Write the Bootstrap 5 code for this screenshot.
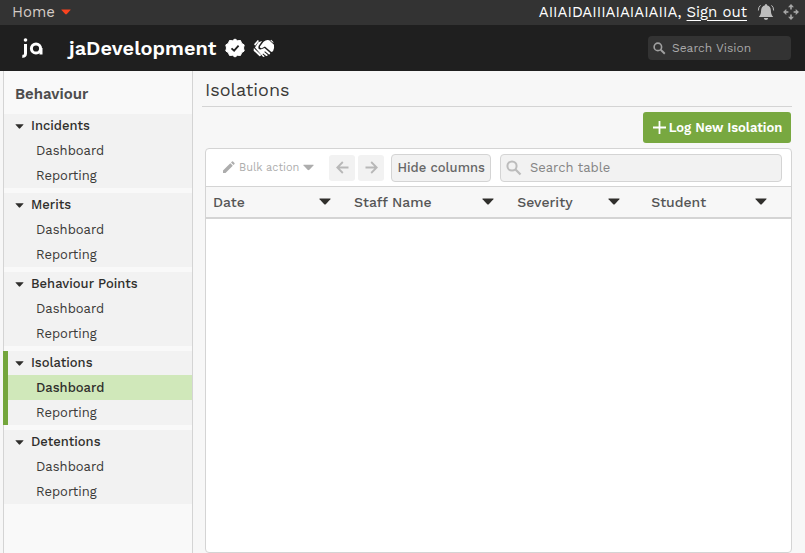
<!DOCTYPE html>
<html lang="en">
<head>
<meta charset="utf-8">
<meta name="viewport" content="width=device-width, initial-scale=1">
<title>Isolations - jaDevelopment</title>
<link href="https://cdn.jsdelivr.net/npm/bootstrap@5.3.0/dist/css/bootstrap.min.css" rel="stylesheet">
<style>
  body { font-family: "Work Sans", Inter, "Open Sans", sans-serif; font-size: 13px; line-height: 20px; color: #3b3a38; background: #f7f7f7; }
  svg { display: block; flex: none; }
  .btn { font-size: 13px; line-height: 20px; }
  .top-strip { background: #333; height: 25px; font-size: 15px; color: #fff; padding: 0 5px 2px 12px; }
  .top-strip .home-menu { font-size: 15px; color: #d3cbc6; gap: 6px; }
  .top-strip .bell { margin: 0 5px 0 8px; }
  .top-strip a { color: #fff; text-underline-offset: 3px; }
  .brand-strip { background: #1f1f1f; height: 46px; padding: 0 14px 0 22px; }
  .brand-name { font-size: 20px; line-height: 24px; font-weight: 600; color: #fff; margin: 0 9px 0 25px; }
  .vision-search { width: 143px; height: 24px; background: #333; border-radius: 4px; padding: 0 5px; gap: 6px; }
  .vision-search input { font-size: 12px; color: #ccc; }
  .vision-search input::placeholder { color: #a9a9a9; opacity: 1; }
  input { outline-offset: 2px; min-width: 0; }
  .side { width: 190px; margin-left: 3px; border: solid #d4d4d4; border-width: 0 1px; background: #f9f9f9; }
  .side h2 { font-size: 15px; line-height: 22px; font-weight: 600; color: #4d4d4d; margin: 0; padding: 12px 11px 9px; }
  .side-group { background: #f2f2f2; margin-bottom: 5px; }
  .side-group .group-toggle { height: 24px; padding: 0 11px; gap: 7px; font-weight: 500; color: #2f2e2c; }
  .side-group a { display: block; height: 25px; line-height: 25px; padding-left: 32px; color: #3b3a38; text-decoration: none; }
  .side-group.current { border-left: 5px solid #74a63c; margin-left: -1px; }
  .side-group.current .group-toggle { padding-left: 7px; }
  .side-group.current a { padding-left: 28px; }
  .side-group a.active { background: #d0e8ba; font-weight: 500; color: #2f2e2c; }
  .main-area { padding: 0 13px 0 9px; }
  .main-area h1 { font-size: 18px; line-height: 24px; font-weight: 400; margin: 0; padding: 7px 3px 4px; border-bottom: 1px solid #d4d4d4; }
  .log-btn { min-width: 148px; height: 31px; border-radius: 3px; background: #78a840; color: #fff; font-weight: 600; padding: 0 6px; gap: 2px; margin: 5px 1px 5px 0; }
  .panel { margin-left: 3px; border: 1px solid #d4d4d4; border-radius: 4px; background: #fff; }
  .tools { height: 37px; padding: 0 9px 0 16px; }
  .bulk-btn { color: #adadad; font-size: 11px; gap: 4px; margin-right: 15px; }
  .step-btn { width: 26px; height: 26px; border-radius: 3px; background: #f2f2f2; color: #b8b8b8; margin-right: 3px; }
  .hide-btn { height: 28px; padding: 0 5px; border: 1px solid #d4d4d4; border-radius: 4px; background: #f2f2f2; color: #666; font-weight: 500; margin: 0 9px 0 4px; }
  .table-search { height: 28px; border: 1px solid #d4d4d4; border-radius: 4px; background: #f2f2f2; padding: 0 5px; gap: 8px; }
  .table-search input::placeholder { color: #858585; opacity: 1; }
  .records { table-layout: fixed; border-collapse: collapse; }
  .records th { height: 31px; padding: 0 0 0 7px; background: #f7f7f7; border-top: 1px solid #d4d4d4; border-bottom: 2px solid #d4d4d4; font-size: 14px; font-weight: 500; color: #555; }
  .records svg { color: #302f2c; }
</style>
</head>
<body class="d-flex flex-column min-vh-100">
<svg class="d-none" aria-hidden="true">
  <symbol id="caret" viewBox="0 0 12 7"><path d="M.8.5h10.4q.8 0 .2.7L7 6Q6 7 5 6L.6 1.200Q0 .5.8.5z" fill="currentColor"/></symbol>
  <symbol id="lens" viewBox="0 0 16 16"><circle cx="6" cy="6" r="4.600" fill="none" stroke="currentColor" stroke-width="2"/><path d="M9.500 9.500l5 5" stroke="currentColor" stroke-width="2.300" fill="none"/></symbol>
</svg>

<header>
  <div class="top-strip d-flex align-items-center">
    <button type="button" class="home-menu btn p-0 border-0 d-flex align-items-center">Home
      <svg width="10" height="6" color="#f8431f" aria-hidden="true"><use href="#caret"/></svg></button>
    <div class="ms-auto">AIIAIDAIIIAIAIAIAIIA, <a href="#">Sign out</a></div>
    <button type="button" class="bell btn p-0 border-0" aria-label="Notifications">
      <svg width="22" height="18" viewBox="0 0 22 18" fill="#bdbdbd"><path d="M11 1q1 0 1 1.300c2.500.6 3.800 2.300 3.900 5.200.1 3.200.5 4.300 2.300 6.500H3.800c1.800-2.200 2.200-3.300 2.300-6.500.1-2.900 1.400-4.600 3.900-5.200Q10 1 11 1zM8.800 15h4.400q-.3 2-2.200 2t-2.200-2z"/><path d="M5.500 2.300Q3.300 4 3.400 7.500M16.500 2.300Q18.700 4 18.600 7.500" fill="none" stroke="#bdbdbd"/></svg></button>
    <button type="button" class="btn p-0 border-0" aria-label="Expand">
      <svg width="18" height="18" viewBox="0 0 18 18" fill="#a6a6a6"><g id="arm"><path d="M9 1l3 3.300H6z"/><path d="M8.200 4h1.600v2.400H8.200z"/></g><use href="#arm" transform="rotate(90 9 9)"/><use href="#arm" transform="rotate(180 9 9)"/><use href="#arm" transform="rotate(270 9 9)"/></svg></button>
  </div>
  <div class="brand-strip d-flex align-items-center">
    <svg width="22" height="22" viewBox="0 0 22 22" role="img" aria-label="ja" fill="none" stroke="#fff" stroke-width="3"><path d="M3.500 7v9.500q0 3-3.200 2.700"/><circle cx="3.500" cy="3" r="1.800" fill="#fff" stroke="none"/><circle cx="14" cy="11.500" r="4.600"/><path d="M19 11V17.500"/></svg>
    <div class="brand-name">jaDevelopment</div>
    <svg width="20" height="20" viewBox="0 0 20 20" role="img" aria-label="Verified"><path d="M10 1l2.500 1.700 3-.2 1.100 2.800 2.600 1.600L18.500 10l.7 3-2.600 1.700-1.100 2.700-3-.1L10 19l-2.500-1.700-3 .1-1.100-2.700L.8 13l.7-3-.7-3.100 2.600-1.600 1.100-2.800 3 .2z" fill="#fff" stroke="#fff" stroke-linejoin="round"/><path d="M6.500 10.300l2.600 2.400 4.500-5" fill="none" stroke="#1f1f1f" stroke-width="1.800"/></svg>
    <svg class="ms-2" width="22" height="19" viewBox="0 0 23 20" role="img" aria-label="Partnership" fill="#fff"><path d="M1 5.500L5 1l1.200 1-4 5zM11 2.800Q14 .4 17 1.400L22 6q.7 4-1 6.800l-1.800 1L12.500 8l-3.400 1.700Q7 10 7.200 8zM5.500 3.300l4-1.200L5.800 7.300q-1 3.800 2.200 3.700l4-1.600 6 5.300q.2 1.700-1.300 1.500l-4.200-3.300-.7.800 3.700 3.200q-.5 1.300-1.700.9l-3.300-2.500-.6.8 2.300 2q-.6 1-1.800.7L2 9z"/><path d="M.8 9.500l7.600 7.200q0 1.600-1.600 1.400L.6 12.300zM19 .800l2.600 2.500-.6.700-2.800-2.500z"/></svg>
    <div class="vision-search d-flex align-items-center ms-auto">
      <svg width="13" height="13" color="#a0a0a0" aria-hidden="true"><use href="#lens"/></svg>
      <input type="search" class="w-100 border-0 bg-transparent p-0" placeholder="Search Vision" aria-label="Search Vision">
    </div>
  </div>
</header>

<div class="d-flex flex-grow-1">
  <nav class="side flex-shrink-0" aria-label="Behaviour">
    <h2>Behaviour</h2>
    <div class="side-group">
      <button type="button" class="group-toggle btn border-0 d-flex align-items-center"><svg width="9" height="5" aria-hidden="true"><use href="#caret"/></svg>Incidents</button>
      <a href="#">Dashboard</a><a href="#">Reporting</a>
    </div>
    <div class="side-group">
      <button type="button" class="group-toggle btn border-0 d-flex align-items-center"><svg width="9" height="5" aria-hidden="true"><use href="#caret"/></svg>Merits</button>
      <a href="#">Dashboard</a><a href="#">Reporting</a>
    </div>
    <div class="side-group">
      <button type="button" class="group-toggle btn border-0 d-flex align-items-center"><svg width="9" height="5" aria-hidden="true"><use href="#caret"/></svg>Behaviour Points</button>
      <a href="#">Dashboard</a><a href="#">Reporting</a>
    </div>
    <div class="side-group current">
      <button type="button" class="group-toggle btn border-0 d-flex align-items-center"><svg width="9" height="5" aria-hidden="true"><use href="#caret"/></svg>Isolations</button>
      <a href="#" class="active" aria-current="page">Dashboard</a><a href="#">Reporting</a>
    </div>
    <div class="side-group">
      <button type="button" class="group-toggle btn border-0 d-flex align-items-center"><svg width="9" height="5" aria-hidden="true"><use href="#caret"/></svg>Detentions</button>
      <a href="#">Dashboard</a><a href="#">Reporting</a>
    </div>
  </nav>

  <main class="main-area flex-grow-1 d-flex flex-column">
    <h1>Isolations</h1>
    <button type="button" class="log-btn btn border-0 d-flex align-items-center justify-content-center align-self-end">
      <svg width="15" height="15" viewBox="0 0 15 15" aria-hidden="true"><path d="M7.500 1v13M1 7.500h13" stroke="#fff" stroke-width="1.800"/></svg>Log New Isolation</button>
    <section class="panel flex-grow-1" aria-label="Isolation records">
      <div class="tools d-flex align-items-center">
        <button type="button" class="bulk-btn btn p-0 border-0 d-flex align-items-center flex-shrink-0">
          <svg width="13" height="13" viewBox="0 0 13 13" fill="currentColor" aria-hidden="true"><path d="M1 9.500L8.300 2.200l2.500 2.500L3.500 12H1zM9 1.500l1-1q.5-.4 1 0L12.500 2q.4.500 0 1l-1 1z"/></svg>Bulk action
          <svg width="11" height="7" aria-hidden="true"><use href="#caret"/></svg></button>
        <button type="button" class="step-btn btn p-0 border-0 d-flex align-items-center justify-content-center flex-shrink-0" aria-label="Previous">
          <svg width="13" height="13" viewBox="0 0 13 13" fill="none" stroke="currentColor" stroke-width="1.800" aria-hidden="true"><path d="M12.500 6.500H1.500M6.800 1L1.300 6.500 6.800 12"/></svg></button>
        <button type="button" class="step-btn btn p-0 border-0 d-flex align-items-center justify-content-center flex-shrink-0" aria-label="Next">
          <svg width="13" height="13" viewBox="0 0 13 13" fill="none" stroke="currentColor" stroke-width="1.800" aria-hidden="true"><path d="M.5 6.500h11M6.200 1l5.500 5.500L6.200 12"/></svg></button>
        <button type="button" class="hide-btn btn flex-shrink-0 d-flex align-items-center">Hide columns</button>
        <div class="table-search d-flex align-items-center flex-grow-1">
          <svg width="16" height="16" color="#bcbcbc" aria-hidden="true"><use href="#lens"/></svg>
          <input type="search" class="w-100 border-0 bg-transparent p-0" placeholder="Search table" aria-label="Search table">
        </div>
      </div>
      <table class="records w-100">
        <colgroup><col style="width:24.1%"><col style="width:27.9%"><col style="width:22.9%"><col style="width:25.1%"></colgroup>
        <thead>
          <tr>
            <th scope="col"><div class="d-flex align-items-center justify-content-between pe-3">Date<svg width="12" height="7" aria-hidden="true"><use href="#caret"/></svg></div></th>
            <th scope="col"><div class="d-flex align-items-center justify-content-between pe-3">Staff Name<svg width="12" height="7" aria-hidden="true"><use href="#caret"/></svg></div></th>
            <th scope="col"><div class="d-flex align-items-center justify-content-between pe-4">Severity<svg width="12" height="7" aria-hidden="true"><use href="#caret"/></svg></div></th>
            <th scope="col"><div class="d-flex align-items-center justify-content-between pe-4">Student<svg width="12" height="7" aria-hidden="true"><use href="#caret"/></svg></div></th>
          </tr>
        </thead>
        <tbody></tbody>
      </table>
    </section>
  </main>
</div>
<script src="https://cdn.jsdelivr.net/npm/bootstrap@5.3.0/dist/js/bootstrap.bundle.min.js"></script>
</body>
</html>
